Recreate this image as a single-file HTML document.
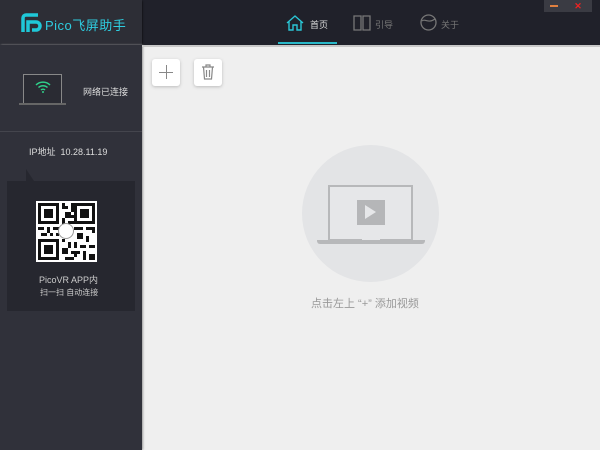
<!DOCTYPE html>
<html><head><meta charset="utf-8"><style>
*{margin:0;padding:0;box-sizing:border-box}
body{width:600px;height:450px;overflow:hidden;background:#efefef;font-family:"Liberation Sans","Noto Sans CJK SC",sans-serif;position:relative}
.a{position:absolute}
</style></head><body>
<div class="a" style="left:0;top:0;width:600px;height:45px;background:#20212a"></div>
<div class="a" style="left:0;top:0;width:142px;height:45px;background:#2d2e36;box-shadow:0 1px 2px #000"></div>
<div class="a" style="left:0;top:45px;width:142px;height:405px;background:#30313a;box-shadow:1px 0 2px #999"></div>
<div class="a" style="left:142px;top:45px;width:458px;height:2px;background:#c8c8c8"></div>
<svg class="a" style="left:21px;top:13px" width="22" height="20" viewBox="0 0 22 20"><path d="M2 19V5a3 3 0 0 1 3-3h12" stroke="#1fc8d8" stroke-width="3.5" fill="none"/><path d="M7 19V9h8a4 4 0 0 1 0 8h-4" stroke="#1fc8d8" stroke-width="3.5" fill="none"/></svg>
<div class="a" style="left:45px;top:15px;color:#2ecde0;font-size:13px;letter-spacing:.5px">Pico飞屏助手</div>
<svg class="a" style="left:286px;top:15px" width="18" height="16" viewBox="0 0 18 16"><path d="M1 8L9 1l8 7M3 6v9h4v-5h4v5h4V6" stroke="#2ac6d6" stroke-width="1.4" fill="none"/></svg>
<div class="a" style="left:310px;top:18px;color:#ddd;font-size:9px">首页</div>
<div class="a" style="left:278px;top:42px;width:59px;height:2px;background:#28b8c8"></div>
<svg class="a" style="left:353px;top:15px" width="18" height="16" viewBox="0 0 18 16"><path d="M1 1h7v14H1zM10 1h7v14h-7z" stroke="#777" stroke-width="1.3" fill="none"/></svg>
<div class="a" style="left:375px;top:18px;color:#777;font-size:9px">引导</div>
<svg class="a" style="left:420px;top:14px" width="17" height="17" viewBox="0 0 17 17"><circle cx="8.5" cy="8.5" r="7.5" stroke="#777" stroke-width="1.3" fill="none"/><path d="M2 7c3-3 6 3 13-2" stroke="#777" stroke-width="1.2" fill="none"/></svg>
<div class="a" style="left:441px;top:18px;color:#777;font-size:9px">关于</div>
<div class="a" style="left:544px;top:0;width:20px;height:12px;background:#3a3b43"></div>
<div class="a" style="left:550px;top:5px;width:8px;height:2px;background:#e08040"></div>
<div class="a" style="left:564px;top:0;width:28px;height:12px;background:#3a3b43;color:#e22;font-size:9px;text-align:center;line-height:12px;font-weight:bold">✕</div>
<div class="a" style="left:152px;top:59px;width:28px;height:27px;background:#fff;border-radius:3px;box-shadow:0 1px 3px #bbb"></div>
<div class="a" style="left:159px;top:72px;width:14px;height:1px;background:#888"></div>
<div class="a" style="left:166px;top:65px;width:1px;height:14px;background:#888"></div>
<div class="a" style="left:194px;top:59px;width:28px;height:27px;background:#fff;border-radius:3px;box-shadow:0 1px 3px #bbb"></div>
<svg class="a" style="left:201px;top:64px" width="14" height="16" viewBox="0 0 14 16"><path d="M1 3h12M5 3V1h4v2M2.5 3l1 12h7l1-12M5.5 6v7M8.5 6v7" stroke="#888" stroke-width="1.2" fill="none"/></svg>
<div class="a" style="left:23px;top:74px;width:39px;height:30px;border:1px solid #888;background:#2a2b33"></div>
<div class="a" style="left:19px;top:103px;width:47px;height:2px;background:#666"></div>
<svg class="a" style="left:35px;top:80px" width="16" height="13" viewBox="0 0 16 13"><path d="M1 5a10 10 0 0 1 14 0M3.5 7.5a6.5 6.5 0 0 1 9 0M6 10a3 3 0 0 1 4 0" stroke="#2fd08a" stroke-width="1.5" fill="none"/><circle cx="8" cy="12" r="1" fill="#2fd08a"/></svg>
<div class="a" style="left:83px;top:85px;color:#ddd;font-size:9px">网络已连接</div>
<div class="a" style="left:0;top:131px;width:142px;height:1px;background:#44454d"></div>
<div class="a" style="left:29px;top:145px;color:#ddd;font-size:9px">IP地址&nbsp;&nbsp;10.28.11.19</div>
<div class="a" style="left:7px;top:181px;width:128px;height:130px;background:#26272f"></div>
<div class="a" style="left:26px;top:169px;width:0;height:0;border-left:8px solid #26272f;border-top:12px solid transparent"></div>
<div class="a" style="left:36px;top:201px;width:61px;height:61px;background:#fff"></div>
<svg class="a" style="left:38px;top:203px" width="57" height="57" viewBox="0 0 19 19" shape-rendering="crispEdges" fill="#111">
<path d="M8 0h1v1h1v1H8zM11 0h2v1h-1v2h-1zM9 3h2v1h1v1H9zM8 5h1v2H8zM10 6h2v1h-2zM0 8h2v1H0zM3 8h1v2H3zM5 8h3v1H5zM9 8h1v1H9zM12 8h3v1h-3zM16 8h3v2h-1v-1h-2zM1 10h2v1H1zM4 10h1v1H4zM13 10h2v2h-2zM16 11h1v2h-1zM0 12h1v1H0zM2 12h4v1H2zM12 13h1v2h-1zM8 12h1v1H8zM10 13h1v2h-1zM14 14h2v1h-2zM17 14h2v1h-2zM8 15h2v2H8zM11 16h3v1h-3zM15 16h1v3h-1zM17 17h2v2h-2zM9 18h3v1H9zM12 17h1v1h-1zM10 10h1v1h-1zM6 10h1v1H6z"/>
<path d="M0 0h7v7H0zM1 1v5h5V1zM2 2h3v3H2zM12 0h7v7h-7zM13 1v5h5V1zM14 2h3v3h-3zM0 12h7v7H0zM1 13v5h5v-5zM2 14h3v3H2z" fill-rule="evenodd"/>
</svg>
<div class="a" style="left:58px;top:223px;width:16px;height:16px;border-radius:50%;background:#fff;border:1px solid #999"></div>
<div class="a" style="left:39px;top:273px;color:#ccc;font-size:9px">PicoVR APP内</div>
<div class="a" style="left:40px;top:287px;color:#ccc;font-size:8px">扫一扫 自动连接</div>
<div class="a" style="left:302px;top:145px;width:137px;height:137px;border-radius:50%;background:#e3e4e6"></div>
<div class="a" style="left:328px;top:185px;width:85px;height:56px;border:2px solid #b7b8ba;background:#e6e7e9"></div>
<div class="a" style="left:317px;top:240px;width:108px;height:4px;background:#b7b8ba;border-radius:0 0 3px 3px"></div>
<div class="a" style="left:362px;top:238px;width:18px;height:2px;background:#e6e7e9"></div>
<div class="a" style="left:357px;top:200px;width:28px;height:25px;background:#b5b6b8"></div>
<div class="a" style="left:365px;top:205px;width:0;height:0;border-left:11px solid #e6e7e9;border-top:7px solid transparent;border-bottom:7px solid transparent"></div>
<div class="a" style="left:311px;top:295px;color:#999;font-size:11px;white-space:pre">点击左上 “+” 添加视频</div>
</body></html>
